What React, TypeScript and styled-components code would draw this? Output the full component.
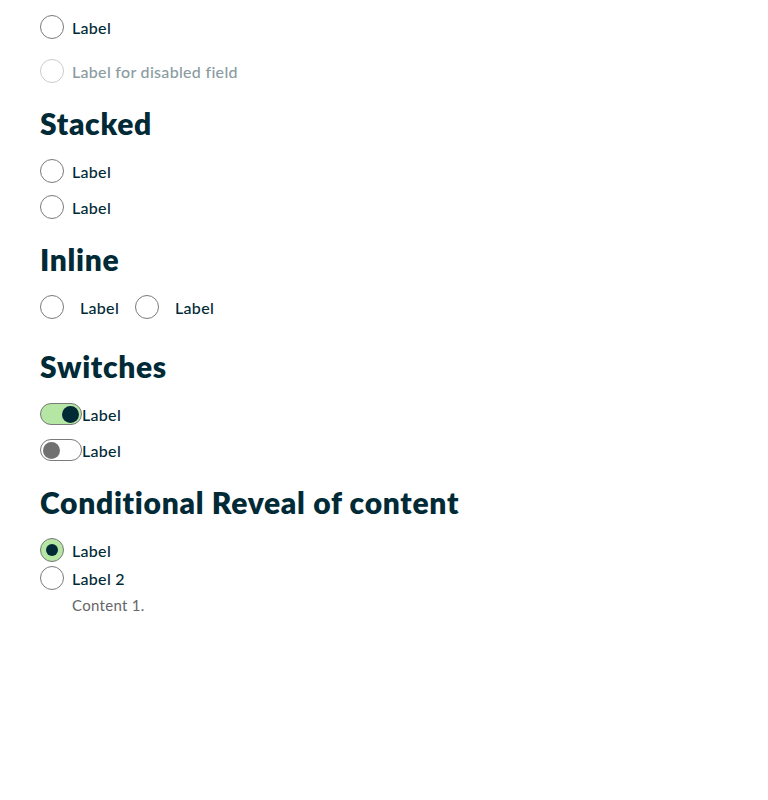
import React from "react";
import styled, { createGlobalStyle } from "styled-components";

const Global = createGlobalStyle`
  html, body { margin: 0; padding: 0; background: #fff; }
  body { font-family: Lato, "Noto Sans", sans-serif; color: #002a36; }
`;

const Page = styled.div`
  padding: 15px 40px;
  display: flex;
  flex-direction: column;
`;

const Heading = styled.h2<{ $top: number; $bottom: number }>`
  margin: ${(p) => p.$top}px 0 ${(p) => p.$bottom}px;
  font-size: 30px;
  line-height: 36px;
  font-weight: 800;
  color: #002a36;
  letter-spacing: 0.7px;
`;

const Stack = styled.div<{ $gap: number }>`
  display: flex;
  flex-direction: column;
  gap: ${(p) => p.$gap}px;
`;

const InlineRow = styled.div`
  display: flex;
  align-items: center;
  gap: 16px;
`;

const Option = styled.label<{ $gap?: number }>`
  display: flex;
  align-items: center;
  gap: ${(p) => p.$gap ?? 8}px;
  height: 24px;
  font-size: 16px;
  letter-spacing: 0.3px;
  color: #002a36;
`;

const Circle = styled.span<{ $checked?: boolean; $disabled?: boolean }>`
  box-sizing: border-box;
  width: 24px;
  height: 24px;
  border-radius: 50%;
  border: 1px solid ${(p) => (p.$disabled ? "#c8cccd" : "#7a7a7a")};
  background: ${(p) => (p.$checked ? "#b5e6a3" : "#fff")};
  display: flex;
  align-items: center;
  justify-content: center;
  flex-shrink: 0;
  &::after {
    content: "";
    display: ${(p) => (p.$checked ? "block" : "none")};
    width: 12px;
    height: 12px;
    border-radius: 50%;
    background: #002a36;
  }
`;

const LabelText = styled.span<{ $disabled?: boolean }>`
  color: ${(p) => (p.$disabled ? "#8a9ba1" : "#002a36")};
  font-weight: 500;
`;

const SwitchTrack = styled.span<{ $on?: boolean }>`
  box-sizing: border-box;
  width: 42px;
  height: 22px;
  border-radius: 11px;
  border: 1px solid #7a7a7a;
  background: ${(p) => (p.$on ? "#b5e6a3" : "#fff")};
  display: flex;
  align-items: center;
  justify-content: ${(p) => (p.$on ? "flex-end" : "flex-start")};
  padding: 0 2px;
  flex-shrink: 0;
`;

const Knob = styled.span<{ $on?: boolean }>`
  width: 17px;
  height: 17px;
  border-radius: 50%;
  background: ${(p) => (p.$on ? "#002a36" : "#717171")};
`;

const SwitchOption = styled(Option)`
  gap: 0;
  height: 22px;
`;

const Content = styled.p`
  margin: 6px 0 0 32px;
  font-size: 15px;
  letter-spacing: 0.3px;
  line-height: 18px;
  color: #666;
`;

export default function App() {
  return (
    <>
      <Global />
      <Page>
        <Stack $gap={20}>
          <Option>
            <Circle />
            <LabelText>Label</LabelText>
          </Option>
          <Option>
            <Circle $disabled />
            <LabelText $disabled>Label for disabled field</LabelText>
          </Option>
        </Stack>

        <Heading $top={22} $bottom={18}>Stacked</Heading>
        <Stack $gap={12}>
          <Option>
            <Circle />
            <LabelText>Label</LabelText>
          </Option>
          <Option>
            <Circle />
            <LabelText>Label</LabelText>
          </Option>
        </Stack>

        <Heading $top={22} $bottom={18}>Inline</Heading>
        <InlineRow>
          <Option $gap={16}>
            <Circle />
            <LabelText>Label</LabelText>
          </Option>
          <Option $gap={16}>
            <Circle />
            <LabelText>Label</LabelText>
          </Option>
        </InlineRow>

        <Heading $top={29} $bottom={19}>Switches</Heading>
        <Stack $gap={14}>
          <SwitchOption>
            <SwitchTrack $on>
              <Knob $on />
            </SwitchTrack>
            <LabelText>Label</LabelText>
          </SwitchOption>
          <SwitchOption>
            <SwitchTrack>
              <Knob />
            </SwitchTrack>
            <LabelText>Label</LabelText>
          </SwitchOption>
        </Stack>

        <Heading $top={23} $bottom={18}>Conditional Reveal of content</Heading>
        <Stack $gap={4}>
          <Option>
            <Circle $checked />
            <LabelText>Label</LabelText>
          </Option>
          <Option>
            <Circle />
            <LabelText>Label 2</LabelText>
          </Option>
        </Stack>
        <Content>Content 1.</Content>
      </Page>
    </>
  );
}
